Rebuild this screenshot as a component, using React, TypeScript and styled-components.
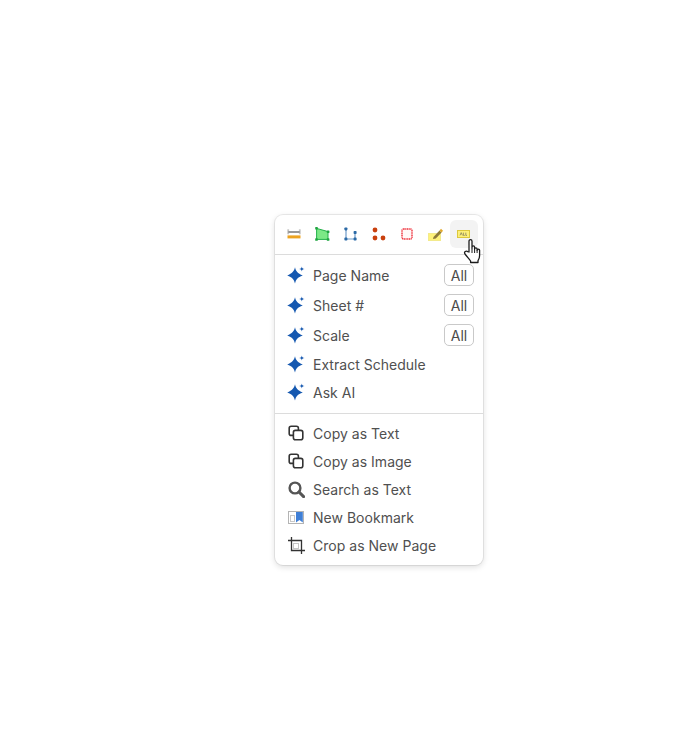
import React from "react";
import styled, { createGlobalStyle } from "styled-components";

const Global = createGlobalStyle`
  html, body { margin: 0; padding: 0; background: #fff; }
  body { font-family: Inter, "Liberation Sans", sans-serif; }
`;

const Page = styled.div`
  width: 684px;
  height: 733px;
  position: relative;
  background: #fff;
  overflow: hidden;
`;

const Menu = styled.div`
  position: absolute;
  left: 275px;
  top: 215px;
  width: 208px;
  box-sizing: border-box;
  background: #fff;
  border-radius: 8px;
  box-shadow: 0 0 0 1px rgba(0, 0, 0, 0.07), 0 2px 6px rgba(0, 0, 0, 0.14);
  padding-bottom: 6px;
`;

const Toolbar = styled.div`
  display: flex;
  align-items: flex-start;
  height: 40px;
  padding: 5px 5px 0;
  gap: 0.33px;
  box-sizing: border-box;
  border-bottom: 1px solid #dcdcdc;
  margin-bottom: 5px;
`;

const ToolButton = styled.div<{ $active?: boolean }>`
  position: relative;
  width: 28px;
  height: 28px;
  flex: none;
  display: flex;
  align-items: center;
  justify-content: center;
  border-radius: 6px;
  background: ${(p) => (p.$active ? "#f3f3f3" : "transparent")};
`;

const Section = styled.div<{ $divided?: boolean }>`
  display: flex;
  flex-direction: column;
  ${(p) => p.$divided && "border-top: 1px solid #dcdcdc; margin-top: 7px; padding-top: 5px;"}
`;

const Row = styled.div<{ $tall?: boolean }>`
  height: ${(p) => (p.$tall ? "30px" : "28px")};
  display: flex;
  align-items: center;
  padding: 0 9px 0 11px;
  color: #505050;
  font-size: 14px;
  letter-spacing: 0.02px;
`;

const IconSlot = styled.span`
  width: 20px;
  height: 20px;
  margin-right: 7px;
  display: flex;
  align-items: center;
  justify-content: center;
  flex: none;
`;

const Label = styled.span`
  flex: 1;
  white-space: nowrap;
`;

const AllBadge = styled.span`
  width: 30px;
  height: 22px;
  box-sizing: border-box;
  display: flex;
  align-items: center;
  justify-content: center;
  border: 1px solid #c9c9c9;
  border-radius: 5px;
  color: #4a4a4a;
  font-size: 14px;
  letter-spacing: 0;
`;

const Cursor = styled.svg`
  position: absolute;
  left: 13px;
  top: 18px;
  z-index: 2;
`;

const Sparkle = () => (
  <svg width="18" height="18" viewBox="0 0 18 18">
    <path fill="#1558b0" d="M8 1.2 C9 5.4 10.4 7.2 15.8 9.4 C10.4 11.4 9 13.2 8 17.6 C7 13.2 5.4 11.4 0.2 9.4 C5.4 7.2 7 5.4 8 1.2Z" />
    <path fill="#1558b0" d="M14.8 0.4 C15 2 15.6 2.6 17.6 3 C15.6 3.4 15 4 14.8 5.6 C14.6 4 14 3.4 12 3 C14 2.6 14.6 2 14.8 0.4Z" />
  </svg>
);

const CopyIcon = () => (
  <svg width="16" height="16" viewBox="0 0 16 16" fill="none" stroke="#333" strokeWidth="1.6">
    <rect x="1.2" y="1.2" width="9.2" height="9.2" rx="2" />
    <rect x="5.4" y="5.4" width="9.4" height="9.4" rx="2" fill="#fff" />
  </svg>
);

const SearchIcon = () => (
  <svg width="17" height="17" viewBox="0 0 17 17" fill="none" stroke="#555" strokeWidth="2.4">
    <circle cx="7" cy="7" r="5.4" />
    <path d="M11 11 15.6 15.6" strokeLinecap="round" strokeWidth="3" />
  </svg>
);

const BookmarkIcon = () => (
  <svg width="16" height="13" viewBox="0 0 16 13">
    <rect x="0.5" y="0.5" width="15" height="12" fill="#fff" stroke="#b4b4b4" />
    <rect x="2.5" y="4.5" width="4" height="6" fill="none" stroke="#c8c8c8" />
    <path d="M8 1h6.8v10.4L11.4 9 8 11.4Z" fill="#3f7fd6" />
  </svg>
);

const CropIcon = () => (
  <svg width="17" height="17" viewBox="0 0 17 17" fill="none">
    <path d="M3.5 0V13.5H17" stroke="#333" strokeWidth="1.3" />
    <path d="M0 3.5H13.5V17" stroke="#333" strokeWidth="1.3" />
    <rect x="5.5" y="6.5" width="5" height="5" fill="none" stroke="#c4c4c4" />
  </svg>
);

const MeasureIcon = () => (
  <svg width="14" height="10" viewBox="0 0 14 10">
    <rect x="0.3" y="0.3" width="1.8" height="5" fill="#c4c4c4" />
    <rect x="11.9" y="0.3" width="1.8" height="5" fill="#c4c4c4" />
    <path d="M1.5 3H12.5" stroke="#333" strokeWidth="1" />
    <rect x="0.5" y="6.4" width="13" height="3" fill="#eda31f" />
  </svg>
);

const AreaIcon = () => (
  <svg width="15" height="14" viewBox="0 0 15 14">
    <path d="M1.6 1.4 13 4.6V12.4H1.6Z" fill="#7ce886" stroke="#25b04a" strokeWidth="1" />
    <g fill="#1fa540">
      <rect x="0.2" y="0" width="2.6" height="2.6" rx="0.6" />
      <rect x="11.8" y="3.4" width="2.6" height="2.6" rx="0.6" />
      <rect x="11.8" y="11.2" width="2.6" height="2.6" rx="0.6" />
      <rect x="0.2" y="11.2" width="2.6" height="2.6" rx="0.6" />
    </g>
  </svg>
);

const PolylineIcon = () => (
  <svg width="13" height="14" viewBox="0 0 13 14">
    <path d="M2 2V12H11V5" fill="none" stroke="#6f9bc9" strokeWidth="1.2" />
    <g fill="#2c6aa6">
      <rect x="0.4" y="0.4" width="3" height="3" rx="0.8" />
      <rect x="9.6" y="4" width="3" height="3" rx="0.8" />
      <rect x="0.4" y="10.6" width="3" height="3" rx="0.8" />
      <rect x="9.6" y="10.6" width="3" height="3" rx="0.8" />
    </g>
  </svg>
);

const DotsIcon = () => (
  <svg width="14" height="14" viewBox="0 0 14 14" fill="#c9400e">
    <circle cx="3" cy="3" r="2.4" />
    <circle cx="3" cy="11" r="2.4" />
    <circle cx="11" cy="11" r="2.4" />
  </svg>
);

const RectIcon = () => (
  <svg width="12" height="12" viewBox="0 0 12 12">
    <rect x="1" y="1" width="10" height="10" rx="1.5" fill="#fff8f8" stroke="#ee2f3a" strokeWidth="1.4" strokeDasharray="1.2 0.5" />
  </svg>
);

const HighlightIcon = () => (
  <svg width="15" height="13" viewBox="0 0 15 13">
    <rect x="0.5" y="5.5" width="12" height="7" fill="#fff27a" stroke="#f3ea8c" />
    <path d="M5.5 9 11.5 2.4 13.6 4.4 7.8 10.6 5 11Z" fill="#8d7a3a" />
    <path d="M11.5 2.4 13 0.8 15 2.8 13.6 4.4Z" fill="#e2a92c" />
  </svg>
);

const TextBoxIcon = () => (
  <svg width="13" height="8" viewBox="0 0 13 8">
    <rect x="0.5" y="0.5" width="12" height="7" fill="#fdf07a" stroke="#dcc83e" />
    <path d="M3 5.4 4.2 2.6 5.4 5.4M6.4 2.6V5.4H7.8M8.8 2.6V5.4H10" fill="none" stroke="#77745a" strokeWidth="0.7" />
  </svg>
);

const HandCursor = () => (
  <Cursor width="20" height="26" viewBox="0 0 20 26">
    <path
      d="M6 14V3.2C6 1 9 1 9 3.2V10.5V9.2C9 7.4 11.6 7.4 11.6 9.2V11C11.6 9.4 14.1 9.4 14.1 11V12.2C14.1 10.8 16.6 10.8 16.6 12.2V17.5C16.6 20.4 15.8 21.4 15 22.6V24.5H7.6V23C6.6 21.5 3.8 18.4 2 16C0.6 14 3.2 12.3 4.6 13.6Z"
      fill="#fff"
      stroke="#1c1c1c"
      strokeWidth="1.3"
      strokeLinejoin="round"
    />
    <path d="M9 11V15M11.6 11V15M14.1 12V15" stroke="#1c1c1c" strokeWidth="1" />
  </Cursor>
);

const tools = [MeasureIcon, AreaIcon, PolylineIcon, DotsIcon, RectIcon, HighlightIcon];

const aiRows = [
  { label: "Page Name", all: true },
  { label: "Sheet #", all: true },
  { label: "Scale", all: true },
  { label: "Extract Schedule", all: false },
  { label: "Ask AI", all: false },
];

const actionRows = [
  { label: "Copy as Text", Icon: CopyIcon },
  { label: "Copy as Image", Icon: CopyIcon },
  { label: "Search as Text", Icon: SearchIcon },
  { label: "New Bookmark", Icon: BookmarkIcon },
  { label: "Crop as New Page", Icon: CropIcon },
];

export default function App() {
  return (
    <Page>
      <Global />
      <Menu>
        <Toolbar>
          {tools.map((Icon, i) => (
            <ToolButton key={i}>
              <Icon />
            </ToolButton>
          ))}
          <ToolButton $active>
            <TextBoxIcon />
            <HandCursor />
          </ToolButton>
        </Toolbar>
        <Section>
          {aiRows.map((r) => (
            <Row key={r.label} $tall={r.all}>
              <IconSlot>
                <Sparkle />
              </IconSlot>
              <Label>{r.label}</Label>
              {r.all && <AllBadge>All</AllBadge>}
            </Row>
          ))}
        </Section>
        <Section $divided>
          {actionRows.map(({ label, Icon }) => (
            <Row key={label}>
              <IconSlot>
                <Icon />
              </IconSlot>
              <Label>{label}</Label>
            </Row>
          ))}
        </Section>
      </Menu>
    </Page>
  );
}
